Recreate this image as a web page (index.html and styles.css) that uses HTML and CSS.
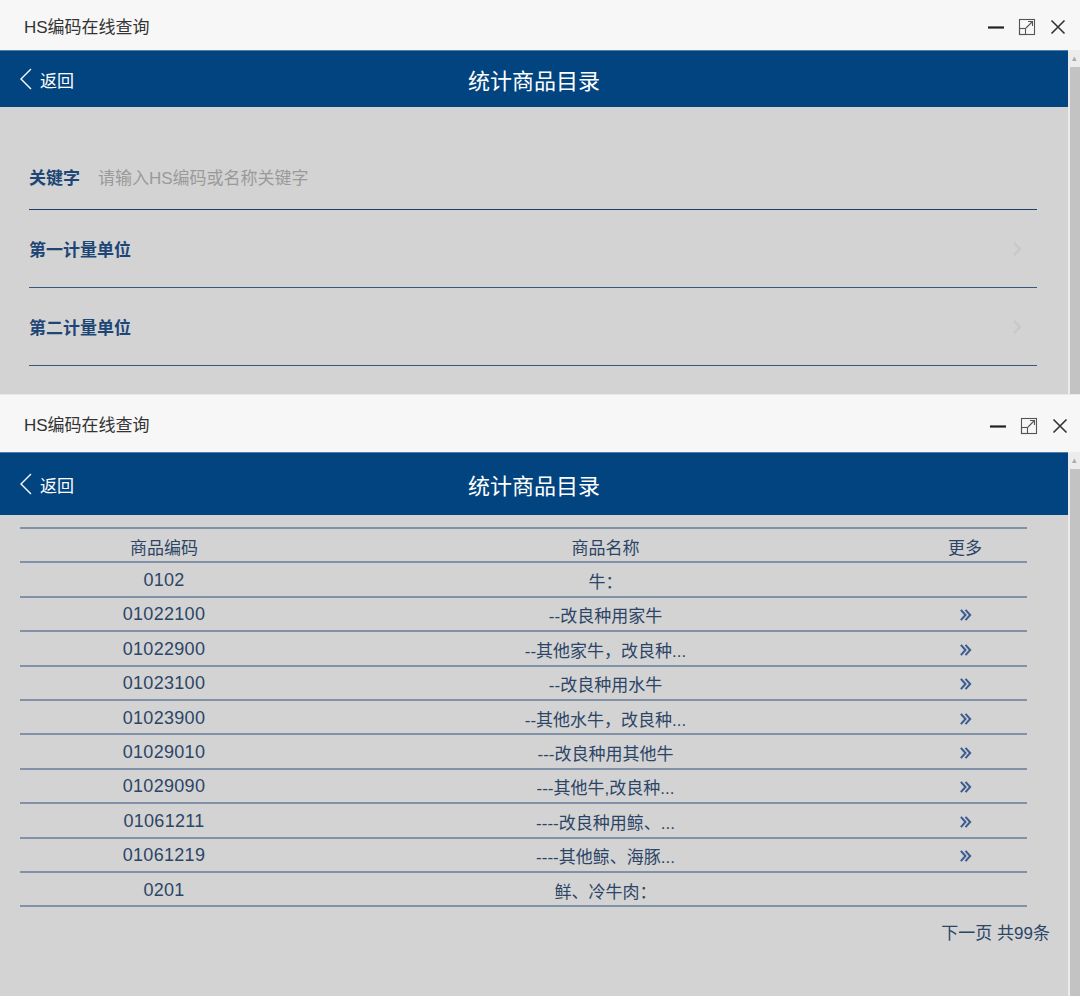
FILE: index.html
```html
<!DOCTYPE html>
<html>
<head>
  <meta charset="UTF-8">
  <title>HS编码在线查询</title>
  <link rel="stylesheet" href="styles.css">
</head>
<body>

<div class="window window--form">
  <div class="titlebar">
    <span class="titlebar__text">HS编码在线查询</span>
    <div class="controls">
      <svg class="controls__icon" viewBox="0 0 18 18"><path d="M1 9.5h16" stroke="#222" stroke-width="2.2"/></svg>
      <svg class="controls__icon" viewBox="0 0 18 18"><rect x="1.5" y="1.5" width="15" height="15" fill="none" stroke="#555" stroke-width="1.1"/><rect x="1.5" y="10.5" width="6" height="6" fill="none" stroke="#555" stroke-width="1.1"/><path d="M8 10l6.5-6.5M10 3.5h4.5V8" fill="none" stroke="#555" stroke-width="1.1"/></svg>
      <svg class="controls__icon" viewBox="0 0 18 18"><path d="M2.5 2.5l13 13M15.5 2.5l-13 13" stroke="#333" stroke-width="1.6"/></svg>
    </div>
  </div>
  <div class="frame">
    <div class="screen">
      <div class="navbar navbar--short">
        <a class="back"><svg class="back__icon" viewBox="0 0 14 24"><polyline points="12,2 2,12 12,22" fill="none" stroke="#fff" stroke-width="1.4"/></svg>返回</a>
        <h1 class="navbar__title">统计商品目录</h1>
      </div>
      <div class="form">
        <div class="form__row form__row--keyword">
          <span class="form__label">关键字</span>
          <span class="form__placeholder">请输入HS编码或名称关键字</span>
        </div>
        <div class="form__row">
          <span class="form__label">第一计量单位</span>
          <svg class="form__arrow" viewBox="0 0 8 14"><polyline points="1,1 7,7 1,13" fill="none" stroke="#c8c8c8" stroke-width="2"/></svg>
        </div>
        <div class="form__row">
          <span class="form__label">第二计量单位</span>
          <svg class="form__arrow" viewBox="0 0 8 14"><polyline points="1,1 7,7 1,13" fill="none" stroke="#c8c8c8" stroke-width="2"/></svg>
        </div>
      </div>
    </div>
    <div class="scrollbar">
      <div class="scrollbar__arrow">&#9652;</div>
      <div class="scrollbar__thumb"></div>
    </div>
  </div>
</div>

<div class="window window--list">
  <div class="titlebar titlebar--tall">
    <span class="titlebar__text">HS编码在线查询</span>
    <div class="controls">
      <svg class="controls__icon" viewBox="0 0 18 18"><path d="M1 9.5h16" stroke="#222" stroke-width="2.2"/></svg>
      <svg class="controls__icon" viewBox="0 0 18 18"><rect x="1.5" y="1.5" width="15" height="15" fill="none" stroke="#555" stroke-width="1.1"/><rect x="1.5" y="10.5" width="6" height="6" fill="none" stroke="#555" stroke-width="1.1"/><path d="M8 10l6.5-6.5M10 3.5h4.5V8" fill="none" stroke="#555" stroke-width="1.1"/></svg>
      <svg class="controls__icon" viewBox="0 0 18 18"><path d="M2.5 2.5l13 13M15.5 2.5l-13 13" stroke="#333" stroke-width="1.6"/></svg>
    </div>
  </div>
  <div class="frame">
    <div class="screen">
      <div class="navbar">
        <a class="back"><svg class="back__icon" viewBox="0 0 14 24"><polyline points="12,2 2,12 12,22" fill="none" stroke="#fff" stroke-width="1.4"/></svg>返回</a>
        <h1 class="navbar__title">统计商品目录</h1>
      </div>
      <table class="goods">
        <colgroup><col class="goods__code"><col class="goods__name"><col class="goods__more"></colgroup>
        <thead>
          <tr><th>商品编码</th><th>商品名称</th><th>更多</th></tr>
        </thead>
        <tbody id="goods-body"></tbody>
      </table>
      <div class="pager">下一页 共99条</div>
    </div>
    <div class="scrollbar">
      <div class="scrollbar__arrow">&#9652;</div>
      <div class="scrollbar__thumb"></div>
    </div>
  </div>
</div>

<script>
  const goods = [
    ['0102', '牛：', false],
    ['01022100', '--改良种用家牛', true],
    ['01022900', '--其他家牛，改良种...', true],
    ['01023100', '--改良种用水牛', true],
    ['01023900', '--其他水牛，改良种...', true],
    ['01029010', '---改良种用其他牛', true],
    ['01029090', '---其他牛,改良种...', true],
    ['01061211', '----改良种用鲸、...', true],
    ['01061219', '----其他鲸、海豚...', true],
    ['0201', '鲜、冷牛肉：', false]
  ]

  const more = '<svg class="goods__chevron" viewBox="0 0 14 14"><polyline points="2,1.5 7,7 2,12.5" fill="none" stroke="#3b5c92" stroke-width="2.2"/><polyline points="7,1.5 12,7 7,12.5" fill="none" stroke="#3b5c92" stroke-width="2.2"/></svg>'

  const body = document.getElementById('goods-body')
  goods.forEach(row => {
    const tr = document.createElement('tr')
    tr.innerHTML = `<td class="goods__num">${row[0]}</td><td>${row[1]}</td><td>${row[2] ? more : ''}</td>`
    body.appendChild(tr)
  })
</script>
</body>
</html>
```

FILE: styles.css
```css
html, body {
  margin: 0;
  padding: 0;
}
*, *:before, *:after {
  box-sizing: border-box;
}
body {
  background-color: #d3d3d3;
  font-family: "Liberation Sans", "Noto Sans CJK SC", sans-serif;
  width: 1080px;
}
.window {
  display: flex;
  flex-direction: column;
}
.window--form {
  height: 395px;
  border-bottom: 1px solid #e9e9e9;
}
.window--list {
  height: 601px;
}
.titlebar {
  background-color: #f7f7f7;
  height: 50px;
  display: flex;
  align-items: center;
  justify-content: space-between;
  padding: 0 13px 0 24px;
  flex: none;
}
.titlebar--tall {
  height: 57px;
  padding-right: 11px;
}
.titlebar__text {
  color: #333;
  font-size: 17px;
}
.controls {
  display: flex;
  align-items: center;
  gap: 13px;
  padding-top: 4px;
}
.controls__icon {
  width: 18px;
  height: 18px;
}
.frame {
  display: flex;
  flex: 1;
  min-height: 0;
}
.screen {
  flex: 1;
  background-color: #d3d3d3;
  overflow: hidden;
}
.scrollbar {
  width: 12px;
  background-color: #ececec;
  display: flex;
  flex-direction: column;
  flex: none;
}
.scrollbar__arrow {
  height: 17px;
  color: #aaa;
  font-size: 9px;
  text-align: center;
  line-height: 17px;
}
.scrollbar__thumb {
  flex: 1;
  margin-left: 2px;
  background-color: #c3c3c3;
}
.navbar {
  background-color: #02447f;
  height: 63px;
  display: grid;
  grid-template-columns: 1fr auto 1fr;
  align-items: center;
  border-top: 1px solid #4c7fb0;
}
.navbar--short {
  height: 57px;
}
.back {
  display: flex;
  align-items: center;
  color: #fff;
  font-size: 17px;
  padding-left: 19px;
  gap: 7px;
}
.back__icon {
  width: 14px;
  height: 24px;
}
.navbar__title {
  margin: 0;
  color: #fff;
  font-size: 22px;
  font-weight: normal;
}
.form {
  padding: 25px 31px 0 29px;
}
.form__row {
  height: 78px;
  display: flex;
  align-items: center;
  border-bottom: 1px solid #39587f;
  padding-right: 16px;
  font-size: 17px;
}
.form__row--keyword {
  padding-top: 12px;
  border-bottom-color: #203f69;
}
.form__label {
  color: #1d4676;
  font-weight: bold;
  flex: 1;
}
.form__row--keyword .form__label {
  flex: none;
  margin-right: 18px;
}
.form__placeholder {
  color: #9a9a9a;
}
.form__arrow {
  width: 8px;
  height: 14px;
}
.goods {
  width: 1007px;
  margin: 12px 0 0 20px;
  border-collapse: collapse;
  color: #2c4567;
  font-size: 17px;
  table-layout: fixed;
}
.goods__code {
  width: 288px;
}
.goods__name {
  width: 595px;
}
.goods__more {
  width: 124px;
}
.goods tr {
  height: 34.4px;
  border-bottom: 2px solid #8192a8;
}
.goods thead tr {
  border-top: 2px solid #8192a8;
}
.goods th {
  font-weight: normal;
}
.goods th, .goods td {
  padding: 2px 0 0;
  text-align: center;
  vertical-align: middle;
}
.goods .goods__num {
  font-size: 18px;
  letter-spacing: 0.3px;
}
.goods__chevron {
  width: 13px;
  height: 14px;
  vertical-align: middle;
}
.pager {
  text-align: right;
  padding-right: 18px;
  margin-top: 15px;
  color: #2c4567;
  font-size: 17px;
  line-height: 24px;
}
```
